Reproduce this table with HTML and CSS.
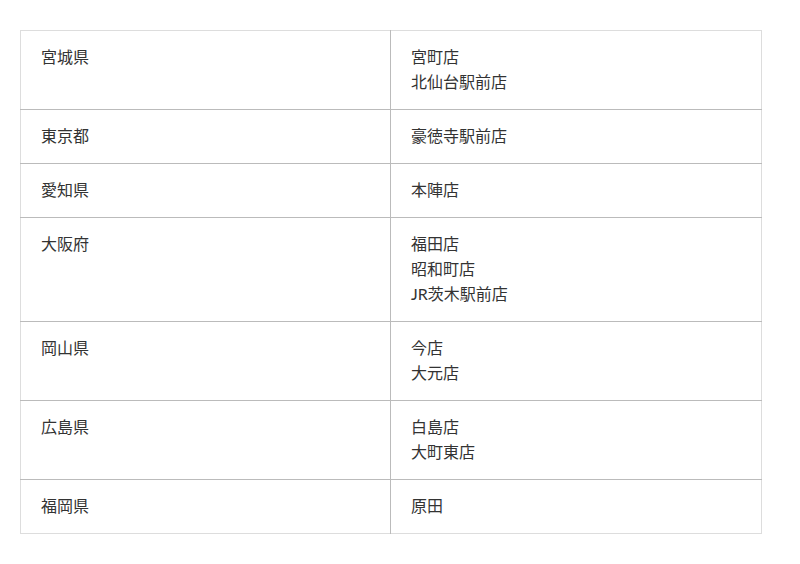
FILE: index.html
```html
<!DOCTYPE html>
<html lang="ja">
<head>
<meta charset="utf-8">
<link rel="stylesheet" href="styles.css">
</head>
<body>
<table class="shops">
  <tr><td class="pref">宮城県</td><td class="list">宮町店<br>北仙台駅前店</td></tr>
  <tr><td class="pref">東京都</td><td class="list">豪徳寺駅前店</td></tr>
  <tr><td class="pref">愛知県</td><td class="list">本陣店</td></tr>
  <tr><td class="pref">大阪府</td><td class="list">福田店<br>昭和町店<br>JR茨木駅前店</td></tr>
  <tr><td class="pref">岡山県</td><td class="list">今店<br>大元店</td></tr>
  <tr><td class="pref">広島県</td><td class="list">白島店<br>大町東店</td></tr>
  <tr><td class="pref">福岡県</td><td class="list">原田</td></tr>
</table>
</body>
</html>
```
FILE: styles.css
```css
body {
  margin: 30px 0 0 20px;
  background: #fff;
  font-family: Lato, "Noto Sans CJK JP", sans-serif;
  color: #333;
}
.shops {
  width: 742px;
  border-collapse: collapse;
  border: 1px solid #ddd;
  font-size: 16px;
  line-height: 25px;
}
.shops td {
  vertical-align: top;
  padding: 13px 20px 15px 20px;
  border-top: 1px solid #bbb;
}
.shops tr:first-child td {
  border-top: 1px solid #ddd;
}
.pref {
  width: 329px;
  border-right: 1px solid #bbb;
}
```
